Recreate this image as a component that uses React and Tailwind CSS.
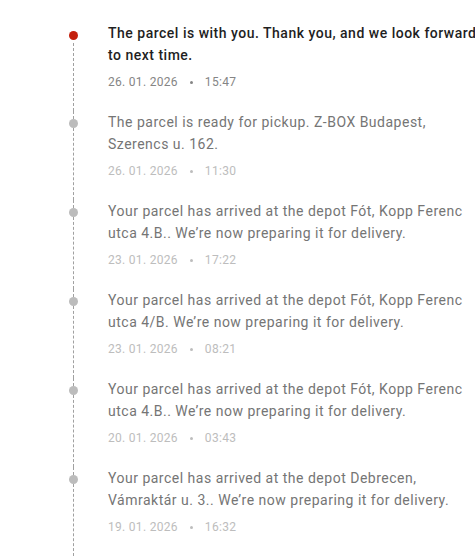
import React from "react";

const events = [
  {
    text: "The parcel is with you. Thank you, and we look forward to next time.",
    date: "26. 01. 2026",
    time: "15:47",
    active: true,
  },
  {
    text: "The parcel is ready for pickup. Z-BOX Budapest, Szerencs u. 162.",
    date: "26. 01. 2026",
    time: "11:30",
  },
  {
    text: "Your parcel has arrived at the depot Fót, Kopp Ferenc utca 4.B.. We’re now preparing it for delivery.",
    date: "23. 01. 2026",
    time: "17:22",
  },
  {
    text: "Your parcel has arrived at the depot Fót, Kopp Ferenc utca 4/B. We’re now preparing it for delivery.",
    date: "23. 01. 2026",
    time: "08:21",
  },
  {
    text: "Your parcel has arrived at the depot Fót, Kopp Ferenc utca 4.B.. We’re now preparing it for delivery.",
    date: "20. 01. 2026",
    time: "03:43",
  },
  {
    text: "Your parcel has arrived at the depot Debrecen, Vámraktár u. 3.. We’re now preparing it for delivery.",
    date: "19. 01. 2026",
    time: "16:32",
  },
];

const TimelineItem = ({ item, first }) => {
  return (
    <div className="flex">
      <div className="flex flex-col items-center w-[9px] shrink-0">
        <div
          className={
            first
              ? "h-[9px] w-0"
              : "h-[8px] w-0 border-l border-dashed border-[#a0a0a0]"
          }
        />
        <div
          className={
            item.active
              ? "w-[9px] h-[9px] rounded-full bg-[#c4200e]"
              : "w-[9px] h-[9px] rounded-full bg-[#bcbcbc]"
          }
        />
        <div
          className={
            item.active
              ? "flex-1 w-0 mt-[3px] border-l border-dashed border-[#a0a0a0]"
              : "flex-1 w-0 border-l border-dashed border-[#a0a0a0]"
          }
        />
      </div>
      <div className="ml-[30px] w-[375px] shrink-0 pb-[21px]">
        <p
          className={
            item.active
              ? "text-[14px] leading-[22px] tracking-[0.5px] font-medium text-[#1f1f1f]"
              : "text-[14px] leading-[22px] tracking-[0.5px] text-[#757575]"
          }
        >
          {item.text}
        </p>
        <div
          className={
            item.active
              ? "mt-[8px] flex items-center text-[12px] leading-[16px] tracking-[0.3px] text-[#858585]"
              : "mt-[8px] flex items-center text-[12px] leading-[16px] tracking-[0.3px] text-[#bdbdbd]"
          }
        >
          <span>{item.date}</span>
          <span className="mx-[12px] w-[3px] h-[3px] rounded-full bg-current" />
          <span>{item.time}</span>
        </div>
      </div>
    </div>
  );
};

const App = () => {
  return (
    <div
      className="w-[475px] h-[556px] overflow-hidden bg-white pt-[22px] pl-[69px]"
      style={{ fontFamily: "Roboto, 'Liberation Sans', sans-serif" }}
    >
      {events.map((item, i) => (
        <TimelineItem key={i} item={item} first={i === 0} />
      ))}
    </div>
  );
};

export default App;
